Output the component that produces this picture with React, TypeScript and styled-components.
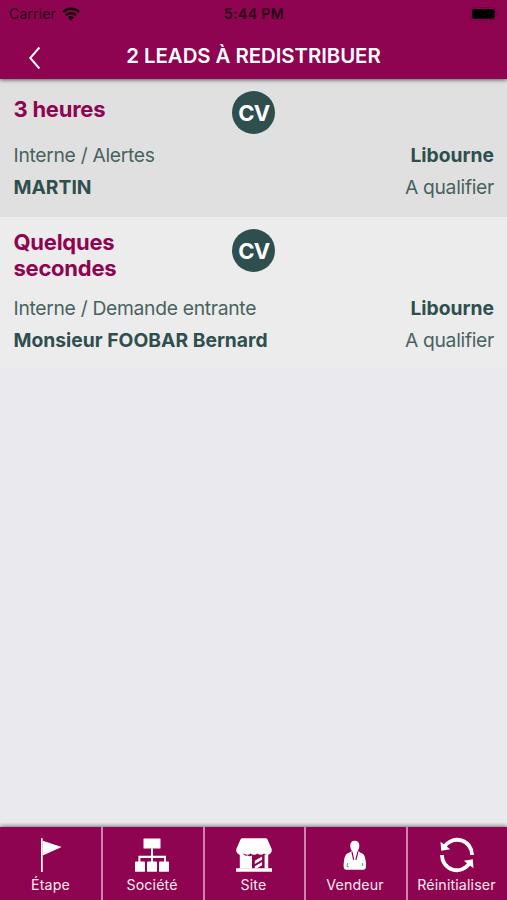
import React from 'react';
import styled, { createGlobalStyle } from 'styled-components';

const PLUM = '#8f0450';
const SLATE = '#2f4f4f';

const GlobalStyle = createGlobalStyle`
  *, *::before, *::after { box-sizing: border-box; }
  html, body, #root { height: 100%; }
  body {
    margin: 0;
    font-family: Inter, 'Liberation Sans', sans-serif;
    overflow: hidden;
  }
`;

const Screen = styled.div`
  display: flex;
  flex-direction: column;
  width: 100%;
  height: 900px;
  background: #e9e9ee;
`;

const TopBar = styled.header`
  height: 79px;
  flex: none;
  z-index: 1;
  background: ${PLUM};
  box-shadow: 0 1px 4px rgba(0, 0, 0, 0.6);
`;

const StatusBar = styled.div`
  display: grid;
  grid-template-columns: 1fr auto 1fr;
  align-items: center;
  height: 27px;
  padding: 0 8px 0 9px;
  color: #250014;
`;

const Carrier = styled.div`
  display: flex;
  align-items: center;
  gap: 6px;
  font-size: 14px;
  letter-spacing: 0.15px;
  line-height: 18px;
`;

const Clock = styled.div`
  font-size: 14px;
  font-weight: 600;
  letter-spacing: 0.35px;
`;

const Battery = styled.svg`
  justify-self: end;
`;

const NavBar = styled.div`
  display: grid;
  grid-template-columns: 70px 1fr 70px;
  align-items: center;
  height: 52px;
`;

const BackButton = styled.button`
  display: flex;
  padding: 9px 0 0 28px;
  border: 0;
  background: none;
`;

const Title = styled.h1`
  margin: 5px 0 0;
  text-align: center;
  white-space: nowrap;
  color: #fff;
  font-size: 20.4px;
  font-weight: 600;
  line-height: 26px;
  letter-spacing: -0.05px;
`;

const List = styled.main`
  flex: 1;
`;

const LeadRow = styled.article<{ $shade: string; $height: number }>`
  height: ${(p) => p.$height}px;
  padding: 12px 13px 0 13.5px;
  background: ${(p) => p.$shade};
  color: ${SLATE};
`;

const LeadHead = styled.div`
  display: grid;
  grid-template-columns: 120px 1fr 120px;
  justify-items: center;
  align-items: start;
`;

const Age = styled.h2<{ $drop: number }>`
  justify-self: start;
  margin: ${(p) => p.$drop}px 0 0;
  color: ${PLUM};
  font-size: 22px;
  font-weight: 650;
  line-height: 26px;
  letter-spacing: -0.25px;
`;

const Avatar = styled.div`
  display: flex;
  align-items: center;
  justify-content: center;
  width: 43px;
  height: 43px;
  border-radius: 50%;
  background: ${SLATE};
  color: #fff;
  font-size: 22px;
  font-weight: 650;
  letter-spacing: -0.8px;
`;

const Details = styled.div<{ $gap: number }>`
  margin-top: ${(p) => p.$gap}px;
`;

const DetailLine = styled.div`
  display: flex;
  justify-content: space-between;
  font-size: 19.3px;
  line-height: 32px;
`;

const Plain = styled.span`
  letter-spacing: -0.3px;
  color: #49625f;
`;

const Strong = styled.span`
  font-weight: 700;
  letter-spacing: 0;
`;

const TabBar = styled.nav`
  display: grid;
  grid-template-columns: 101px 102px 101px 102px 101px;
  flex: none;
  height: 73px;
  background: ${PLUM};
  box-shadow: 0 -1px 4px rgba(0, 0, 0, 0.5);
`;

const Tab = styled.button`
  display: flex;
  flex-direction: column;
  align-items: center;
  padding: 10px 0 0;
  border: 0;
  background: none;
  color: #fbe9f2;
  font-family: inherit;

  & + & {
    padding-right: 2px;
    border-left: 2px solid #cf83ad;
  }
`;

const TabLabel = styled.span`
  margin-top: 3px;
  font-size: 14.2px;
  line-height: 18px;
  letter-spacing: 0.15px;
`;

const WifiIcon = () => (
  <svg width="18" height="14" viewBox="0 0 18 14" fill="none" stroke="#160009" strokeWidth="2.5">
    <path d="M1 5.1a11.5 11.5 0 0 1 16 0" />
    <path d="M4 8.3a7.2 7.2 0 0 1 10 0" />
    <path d="M9 13.4 6 10.5a4.4 4.4 0 0 1 6 0Z" fill="#160009" stroke="none" />
  </svg>
);

const BatteryIcon = () => (
  <Battery width="29" height="14" viewBox="0 0 29 14">
    <rect x="0.6" y="0.6" width="25.3" height="12.6" rx="3.4" fill="none" stroke="#78044a" />
    <rect x="2" y="2" width="22.6" height="9.7" rx="2" fill="#000" />
    <path d="M27 4.7c1.5.7 1.5 3.7 0 4.4Z" fill="#6b053e" />
  </Battery>
);

const BackIcon = () => (
  <svg width="14" height="24" viewBox="0 0 14 24" fill="none" stroke="#fff" strokeWidth="1.9">
    <path d="M11.4 1.5 2.2 12l9.2 10.5" />
  </svg>
);

const FlagIcon = () => (
  <svg width="36" height="36" viewBox="0 0 36 36" fill="#fff">
    <path d="M8 1.3h1.7V35H8z" />
    <path d="M9.7 3.8 28.7 10 9.7 18.4z" />
  </svg>
);

const OrgIcon = () => (
  <svg width="36" height="36" viewBox="0 0 36 36" fill="#fff">
    <rect x="9.5" y="1.4" width="17" height="10.2" rx="0.6" />
    <path d="M17 11.5h2v7.3h13v6.5h-2v-4.2H19v4h-2v-4H6.4v4h-2v-6.3H17z" />
    <rect x="1" y="24.5" width="10" height="10.3" rx="0.9" />
    <rect x="13" y="24.5" width="10" height="10.3" rx="0.9" />
    <rect x="25" y="24.5" width="10" height="10.3" rx="0.9" />
  </svg>
);

const StoreIcon = () => (
  <svg width="36" height="36" viewBox="0 0 36 36" fill="#fff">
    <path d="M6.2 1.2h23.6q1.2 0 1.7 1.2L35.7 12v2.2a4.4 4.4 0 0 1-7.6 2.2 4.7 4.7 0 0 1-6.7 0 4.7 4.7 0 0 1-6.8 0 4.7 4.7 0 0 1-6.7 0A4.4 4.4 0 0 1 .3 14.2V12L4.5 2.4Q5 1.2 6.2 1.2z" />
    <path d="M3.8 17h3.4q2 2.8 4.2 1.3 2 1.500 4.600.3v12.800H3.800zM28.600 17.700h3.600v13.700h-3.600z" />
    <path d="M0 31.200h36v3.600H0z" />
    <path d="m18.800 23.800 7.300-4.300v3.300l-7.300 4.300zM18.800 29.300l7.300-4.300v3.300l-5.500 3.200h-1.800z" />
  </svg>
);

const SellerIcon = () => (
  <svg width="36" height="36" viewBox="0 0 36 36">
    <path d="M17.8 3.800c3.200 0 4.700 2 4.500 5.400-.2 3.400-2.100 6.400-4.500 6.400s-4.300-3-4.500-6.400C13.100 5.800 14.600 3.800 17.800 3.800z" fill="#fff" />
    <path d="M14 14.500h7.800l1.800 1.300c3.500 1 4.500 3.700 5.100 8.200.6 5 .9 8.400-2.300 8.800H9.300C6.100 32.400 6.400 29 7 24c.6-4.500 1.600-7.200 5.100-8.200z" fill="#fff" />
    <path d="m15 15 1.700 7.800M20.800 15l-1.900 7.800" fill="none" stroke={PLUM} strokeWidth="1.200" />
    <path d="m10.600 26-.6 3.500 1.800.6M25.300 26l.4 3" fill="none" stroke={PLUM} strokeWidth="0.6" />
  </svg>
);

const ResetIcon = () => (
  <svg width="36" height="36" viewBox="0 0 36 36" fill="none" stroke="#fff" strokeWidth="3.800">
    <path d="M5.500 9.700A14.900 14.900 0 0 1 33 18" />
    <path d="M30.500 26.300A14.900 14.900 0 0 1 3 18" />
    <path d="m1.500 4.800.7 9 9-1.500z" fill="#fff" stroke="none" />
    <path d="m34.500 31.200-.7-9-9 1.500z" fill="#fff" stroke="none" />
  </svg>
);

const leads = [
  {
    age: '3 heures', owner: 'CV', source: 'Interne / Alertes', site: 'Libourne',
    contact: 'MARTIN', step: 'A qualifier',
    shade: '#e0e0e0', height: 138, drop: 5, gap: 5,
  },
  {
    age: 'Quelques secondes', owner: 'CV', source: 'Interne / Demande entrante', site: 'Libourne',
    contact: 'Monsieur FOOBAR Bernard', step: 'A qualifier',
    shade: '#ececec', height: 151, drop: 0, gap: 11,
  },
];

const tabs = [
  { label: 'Étape', icon: <FlagIcon /> },
  { label: 'Société', icon: <OrgIcon /> },
  { label: 'Site', icon: <StoreIcon /> },
  { label: 'Vendeur', icon: <SellerIcon /> },
  { label: 'Réinitialiser', icon: <ResetIcon /> },
];

export default function App() {
  return (
    <Screen>
      <GlobalStyle />
      <TopBar>
        <StatusBar>
          <Carrier>Carrier <WifiIcon /></Carrier>
          <Clock>5:44 PM</Clock>
          <BatteryIcon />
        </StatusBar>
        <NavBar>
          <BackButton aria-label="Retour"><BackIcon /></BackButton>
          <Title>2 LEADS À REDISTRIBUER</Title>
        </NavBar>
      </TopBar>
      <List>
        {leads.map((lead) => (
          <LeadRow key={lead.age} $shade={lead.shade} $height={lead.height}>
            <LeadHead>
              <Age $drop={lead.drop}>{lead.age}</Age>
              <Avatar>{lead.owner}</Avatar>
            </LeadHead>
            <Details $gap={lead.gap}>
              <DetailLine>
                <Plain>{lead.source}</Plain>
                <Strong>{lead.site}</Strong>
              </DetailLine>
              <DetailLine>
                <Strong>{lead.contact}</Strong>
                <Plain>{lead.step}</Plain>
              </DetailLine>
            </Details>
          </LeadRow>
        ))}
      </List>
      <TabBar>
        {tabs.map((tab) => (
          <Tab key={tab.label}>
            {tab.icon}
            <TabLabel>{tab.label}</TabLabel>
          </Tab>
        ))}
      </TabBar>
    </Screen>
  );
}
